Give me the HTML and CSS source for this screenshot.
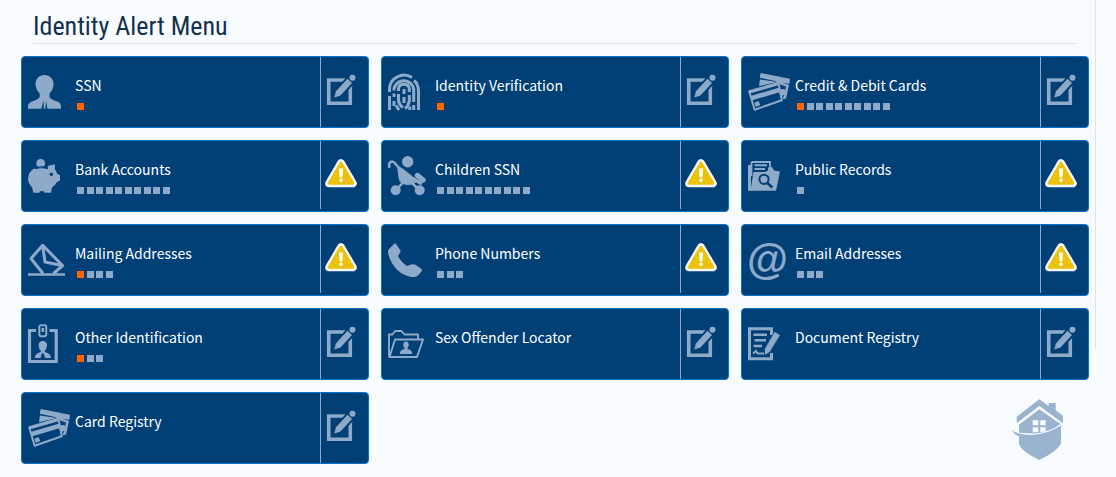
FILE: index.html
```html
<!DOCTYPE html>
<html lang="en">
<head>
<meta charset="utf-8">
<title>Identity Alert Menu</title>
<link rel="stylesheet" href="styles.css">
</head>
<body>
<svg class="sprite" aria-hidden="true">
  <symbol id="edit" viewBox="0 0 30 32">
    <path d="M2.700 6H24.300V29.300H2.700Z" fill="none" stroke="currentColor" stroke-width="3.600"/>
    <path d="M6.500 25.500L9 16 21 2.500 30 8 16 22.500Z" fill="#004077"/>
    <path d="M8.300 23.500L10 17.300 21.500 4.700 26 9 14.500 21.500Z" fill="currentColor"/>
    <circle cx="26.500" cy="3.800" r="3" fill="currentColor"/>
  </symbol>
  <symbol id="warn" viewBox="0 0 32 30">
    <path d="M16 5L28 25.400H4Z" fill="#f7f8fa" stroke="#f7f8fa" stroke-width="7.600" stroke-linejoin="round"/>
    <path d="M16 5.500L27.500 25H4.500Z" fill="#ecc30b" stroke="#ecc30b" stroke-width="3.400" stroke-linejoin="round"/>
    <path d="M14 10.500H18L17.400 19.500H14.600Z" fill="#fff"/>
    <circle cx="16" cy="22.300" r="1.800" fill="#fff"/>
  </symbol>
  <symbol id="cards" viewBox="0 0 44 44">
    <path d="M13.700 3L43 8.700 42.300 14 12.700 7.700Z" fill="currentColor"/>
    <path d="M12.500 12.300L13 9.500 30 12 12 16.200Z" fill="currentColor"/>
    <path d="M29 10.500L36 13.500M33 13L40.500 15.800 38 27.500 36 28" fill="none" stroke="currentColor" stroke-width="2.600"/>
    <circle cx="35.700" cy="22.300" r="3.300" fill="currentColor"/>
    <path d="M2.200 21.300L31.500 12.700 34.800 30.300 7.600 39.700Z" fill="none" stroke="currentColor" stroke-width="2" stroke-linejoin="round"/>
    <path d="M2 21L31.500 12.500 32.200 15 2.800 23.500Z" fill="currentColor"/>
    <path d="M3.500 26L32.500 17.500 33.300 22 4.600 30.500Z" fill="currentColor"/>
    <path d="M8 32.800L11.500 31.700 12.500 35 9 36.300Z" fill="currentColor" stroke="currentColor"/>
  </symbol>
</svg>
<div class="page">
<main class="menu">
  <header class="heading"><h1>Identity Alert Menu</h1></header>
  <div class="tiles">

    <section class="tile">
      <a class="tile-link" href="#ssn">
        <svg class="icon" viewBox="0 0 44 44" aria-hidden="true"><path d="M17.500 5C23 5 26.500 9 26.500 14Q26.700 19 22.500 23.500V27Q24 29.500 29 31 34 32.500 34 36V38.800H20.500L19 31.500H16L14.500 38.800H1V36Q1.200 32.500 6 31 11 29.500 12.700 27V23.500Q8.400 19 8.500 14C8.500 9 12 5 17.500 5Z" fill="currentColor"/><path d="M16.300 29.500H19L18.400 38.800H16.800Z" fill="currentColor"/></svg>
        <span class="info"><span class="name">SSN</span><span class="dots"><i class="on"></i></span></span>
      </a>
      <button class="action" aria-label="Edit SSN"><svg class="edit"><use href="#edit"/></svg></button>
    </section>

    <section class="tile">
      <a class="tile-link" href="#verification">
        <svg class="icon" viewBox="0 0 44 44" fill="none" stroke="currentColor" stroke-width="3" aria-hidden="true"><path d="M2.500 22V19A14.500 14 0 0 1 25 7.500M27 10.500Q31.500 14 31.500 22V40M2.500 26V40M7 20.500V18.500A10 9.500 0 0 1 26.700 19V32M26.700 35V40M7 23.500V27M7 31V36M11.500 21V18.500A5.500 5.200 0 0 1 22.300 18.500V22M22.300 25V31Q21.500 36 18 38.500M11.500 24V30Q12 35 16 37.500M17 19V24M17 27V33"/><path d="M9 35.500L12 40M22.500 40L23 36.500"/></svg>
        <span class="info"><span class="name">Identity Verification</span><span class="dots"><i class="on"></i></span></span>
      </a>
      <button class="action" aria-label="Edit Identity Verification"><svg class="edit"><use href="#edit"/></svg></button>
    </section>

    <section class="tile">
      <a class="tile-link" href="#credit">
        <svg class="icon" aria-hidden="true"><use href="#cards"/></svg>
        <span class="info"><span class="name">Credit &amp; Debit Cards</span><span class="dots"><i class="on"></i> <i></i> <i></i> <i></i> <i></i> <i></i> <i></i> <i></i> <i></i> <i></i></span></span>
      </a>
      <button class="action" aria-label="Edit Credit &amp; Debit Cards"><svg class="edit"><use href="#edit"/></svg></button>
    </section>

    <section class="tile">
      <a class="tile-link" href="#bank">
        <svg class="icon" viewBox="0 0 44 44" aria-hidden="true"><circle cx="13.700" cy="9.300" r="4.400" fill="currentColor"/><path d="M9 15Q13 13.600 18 14.600L21 15.300 20.700 12 27.800 10.300 28 15.500Q29.500 17 30.300 20L33 21V26.500L30 28Q28 31.500 25 33.500L24 38.800H17.500L17 37.300H13L12.500 38.800H6.300L5 33Q1 30 1 24.500 1.300 18 7 14.500Z" fill="currentColor"/><path d="M9 14.200Q13 12 18.500 13.500" fill="none" stroke="#004077" stroke-width="1.200"/><circle cx="24.300" cy="20.300" r="1.700" fill="#004077"/></svg>
        <span class="info"><span class="name">Bank Accounts</span><span class="dots"><i></i> <i></i> <i></i> <i></i> <i></i> <i></i> <i></i> <i></i> <i></i> <i></i></span></span>
      </a>
      <button class="action alert" aria-label="Bank Accounts alert"><svg class="warn"><use href="#warn"/></svg></button>
    </section>

    <section class="tile">
      <a class="tile-link" href="#children">
        <svg class="icon" viewBox="0 0 44 44" fill="currentColor" aria-hidden="true"><circle cx="20.700" cy="7.700" r="5.700"/><path d="M2.300 13Q1.500 8 5 7.500 7 7.500 9 10.500L14 16.500M11 34L16 28.500M25 29L31 35" fill="none" stroke="currentColor" stroke-width="2.600" stroke-linecap="round"/><path d="M10 11.500Q15 13.500 19 17L26 22.800 31 26Q28 31 20 31 12.500 30 11.500 24Z"/><circle cx="8.700" cy="36.300" r="5"/><circle cx="32.700" cy="36.300" r="5"/><path d="M30.500 21.500L36 26" fill="none" stroke="currentColor" stroke-width="5.400" stroke-linecap="round"/><path d="M26.500 25L33.500 29" fill="none" stroke="currentColor" stroke-width="3.600" stroke-linecap="round"/></svg>
        <span class="info"><span class="name">Children SSN</span><span class="dots"><i></i> <i></i> <i></i> <i></i> <i></i> <i></i> <i></i> <i></i> <i></i> <i></i></span></span>
      </a>
      <button class="action alert" aria-label="Children SSN alert"><svg class="warn"><use href="#warn"/></svg></button>
    </section>

    <section class="tile">
      <a class="tile-link" href="#records">
        <svg class="icon" viewBox="0 0 44 44" aria-hidden="true"><path d="M4.500 8H23V18M4.500 8V22" fill="none" stroke="currentColor" stroke-width="1.800"/><path d="M7.500 11.300H20M7.500 15H18" stroke="currentColor" stroke-width="1.900"/><path d="M3.500 36.800L6.500 18H18L21 16.500V13.500L25 13 27 16.500 33 17.500 29 36.800Z" fill="currentColor"/><path d="M1 11H4V36.800H1Z" fill="currentColor"/><circle cx="17" cy="25.300" r="4.600" fill="none" stroke="#004077" stroke-width="2"/><path d="M20.200 28.700L25.300 33.500" stroke="#004077" stroke-width="2.600"/></svg>
        <span class="info"><span class="name">Public Records</span><span class="dots"><i></i></span></span>
      </a>
      <button class="action alert" aria-label="Public Records alert"><svg class="warn"><use href="#warn"/></svg></button>
    </section>

    <section class="tile">
      <a class="tile-link" href="#mailing">
        <svg class="icon" viewBox="0 0 44 44" fill="none" stroke="currentColor" stroke-width="3" stroke-linejoin="round" aria-hidden="true"><path d="M16 35.500L4 20.500 15.700 7.300 35.700 27.700 26.500 35.500M15.700 8L18 24 35 27.500"/><path d="M1 36.500H38" stroke-width="2.400"/></svg>
        <span class="info"><span class="name">Mailing Addresses</span><span class="dots"><i class="on"></i> <i></i> <i></i> <i></i></span></span>
      </a>
      <button class="action alert" aria-label="Mailing Addresses alert"><svg class="warn"><use href="#warn"/></svg></button>
    </section>

    <section class="tile">
      <a class="tile-link" href="#phone">
        <svg class="icon" viewBox="0 0 44 44" aria-hidden="true"><path d="M7.500 5.500Q8.500 5 9 6L13.500 12.500Q13.700 13.500 13 14.500L11 18Q14 24 20 28L24 26.500Q27 26 29 27L34.500 31Q35.300 32 34.500 33.500L31 37.500Q28.500 39.500 24 39 12 36.500 5.500 26 1 18 1 13.500 1.200 11.500 3.500 9.500Z" fill="currentColor"/></svg>
        <span class="info"><span class="name">Phone Numbers</span><span class="dots"><i></i> <i></i> <i></i></span></span>
      </a>
      <button class="action alert" aria-label="Phone Numbers alert"><svg class="warn"><use href="#warn"/></svg></button>
    </section>

    <section class="tile">
      <a class="tile-link" href="#email">
        <span class="icon at" aria-hidden="true">@</span>
        <span class="info"><span class="name">Email Addresses</span><span class="dots"><i></i> <i></i> <i></i></span></span>
      </a>
      <button class="action alert" aria-label="Email Addresses alert"><svg class="warn"><use href="#warn"/></svg></button>
    </section>

    <section class="tile">
      <a class="tile-link" href="#other">
        <svg class="icon" viewBox="0 0 44 44" aria-hidden="true"><path d="M9 8.500H2.500V39.500H29.200V8.500H22.500" fill="none" stroke="currentColor" stroke-width="3.200"/><rect x="12.300" y="3.300" width="7" height="11" rx="2" fill="none" stroke="currentColor" stroke-width="2"/><path d="M14.500 6H17.200V10H14.500Z" fill="currentColor"/><path d="M15.800 19Q20 19.200 20 23.500 19.800 27 17.800 28.500V30Q24 31.500 24 36H18L16.800 31.500H14.800L13.600 36H7.700Q7.700 31.500 13.800 30V28.500Q11.700 27 11.600 23.500 11.600 19.200 15.800 19Z" fill="currentColor"/></svg>
        <span class="info"><span class="name">Other Identification</span><span class="dots"><i class="on"></i> <i></i> <i></i></span></span>
      </a>
      <button class="action" aria-label="Edit Other Identification"><svg class="edit"><use href="#edit"/></svg></button>
    </section>

    <section class="tile">
      <a class="tile-link" href="#offender">
        <svg class="icon" viewBox="0 0 44 44" aria-hidden="true"><path d="M2 34.500V12.500H5.500L8 9H14.500L17.500 12.500H31V17M2.500 35L8 17.500H36L30 35Z" fill="none" stroke="currentColor" stroke-width="1.900" stroke-linejoin="round"/><ellipse cx="19" cy="22.800" rx="2.700" ry="3.200" fill="currentColor"/><path d="M17.500 25H20.500V27Q25.300 28 25.300 32H12.700Q12.700 28 17.500 27Z" fill="currentColor"/></svg>
        <span class="info"><span class="name">Sex Offender Locator</span></span>
      </a>
      <button class="action" aria-label="Edit Sex Offender Locator"><svg class="edit"><use href="#edit"/></svg></button>
    </section>

    <section class="tile">
      <a class="tile-link" href="#documents">
        <svg class="icon" viewBox="0 0 44 44" aria-hidden="true"><path d="M24.500 13V6.800H2.500V36.700H24.500V31" fill="none" stroke="currentColor" stroke-width="3"/><path d="M6.500 12.800H20M7.500 18.300H19M6.500 24H15" fill="none" stroke="currentColor" stroke-width="2.400"/><path d="M6 31.500L9 29 10.500 31.500H17" fill="none" stroke="currentColor" stroke-width="2"/><path d="M17.500 33.500L17.500 27 27.500 9.500 33.300 13 23 30Z" fill="currentColor" stroke="#004077" stroke-width=".6"/></svg>
        <span class="info"><span class="name">Document Registry</span></span>
      </a>
      <button class="action" aria-label="Edit Document Registry"><svg class="edit"><use href="#edit"/></svg></button>
    </section>

    <section class="tile">
      <a class="tile-link" href="#card-registry">
        <svg class="icon" aria-hidden="true"><use href="#cards"/></svg>
        <span class="info"><span class="name">Card Registry</span></span>
      </a>
      <button class="action" aria-label="Edit Card Registry"><svg class="edit"><use href="#edit"/></svg></button>
    </section>

    <svg class="logo" viewBox="0 0 52 62" role="img" aria-label="Home shield">
      <path d="M4.700 17.700L27.300 .3 36.700 7V4H43.700V11L51 17V24.300L27.300 7 4.700 24.300Z"/>
      <path d="M7 25.700L27.300 10.300 48.500 25Q38 33 24 34.500L7 33.700Z"/>
      <path d="M0 31Q2 36 7 37.300V45Q9 52 27.300 61 46 52 49 44V26.500Q36 35 20 36 5 36 0 31Z"/>
      <path d="M20.700 21.300H26.300V26.300H20.700ZM28.300 21.300H33.700V26.300H28.300ZM20.700 28.300H26.300V33.300H20.700ZM28.300 28.300H33.700V32.500L28.300 33.300Z" fill="#f9fcff"/>
    </svg>
  </div>
</main>
<aside class="rail"></aside>
</div>
</body>
</html>
```

FILE: styles.css
```css
* { box-sizing: border-box; }
body {
  margin: 0;
  background: #f9fcff;
  font-family: "Noto Sans CJK SC", "Noto Sans", sans-serif;
}
.sprite { display: none; }
.page { display: flex; align-items: flex-start; }
.menu { flex: 1; padding: 0 6px 12px 21px; }
.rail { width: 21px; height: 349px; border-left: 1px solid #dfe3e6; }
.heading {
  margin: 0 12px;
  padding: 10px 0 0;
  border-bottom: 1px solid #dfe3e6;
}
.heading h1 {
  margin: 0;
  font: 400 26px/33px "Liberation Sans Narrow", "Roboto Condensed", "Liberation Sans", sans-serif;
  color: #13304c;
}
.tiles {
  display: grid;
  grid-template-columns: repeat(3, 1fr);
  gap: 12px;
  margin-top: 12px;
}
.tile {
  display: flex;
  min-height: 72px;
  background: #004077;
  border: 1px solid #0871cb;
  border-radius: 4px;
  color: #8fa9c8;
}
.tile-link {
  flex: 1;
  display: flex;
  gap: 4px;
  padding: 13px 0 13px 5px;
  color: inherit;
  text-decoration: none;
}
.icon { flex: none; width: 44px; height: 44px; }
.at { font: 700 42px/44px "Liberation Sans", sans-serif; }
.info { display: flex; flex-direction: column; gap: 8px; padding-top: 5px; }
.name { color: #fff; font-size: 14px; line-height: 20px; }
.dots { padding-left: 2px; font: 9px/7px "Liberation Sans", sans-serif; }
.dots i {
  display: inline-block;
  width: 7px;
  height: 7px;
  background: #8fa9c8;
  vertical-align: top;
}
.dots .on { background: #ff6600; }
.action {
  display: flex;
  align-items: center;
  justify-content: center;
  width: 48px;
  margin: 0;
  padding: 0 7px 4px 0;
  border: 0;
  border-left: 1px solid #8fa9c8;
  background: none;
  color: inherit;
}
.alert { margin-bottom: 2px; }
.edit { width: 30px; height: 32px; flex: none; }
.warn { width: 32px; height: 30px; flex: none; }
.logo {
  grid-column: 3;
  justify-self: end;
  width: 52px;
  height: 62px;
  margin: 7px 25px 0 0;
  fill: #9ab3ce;
}
```
